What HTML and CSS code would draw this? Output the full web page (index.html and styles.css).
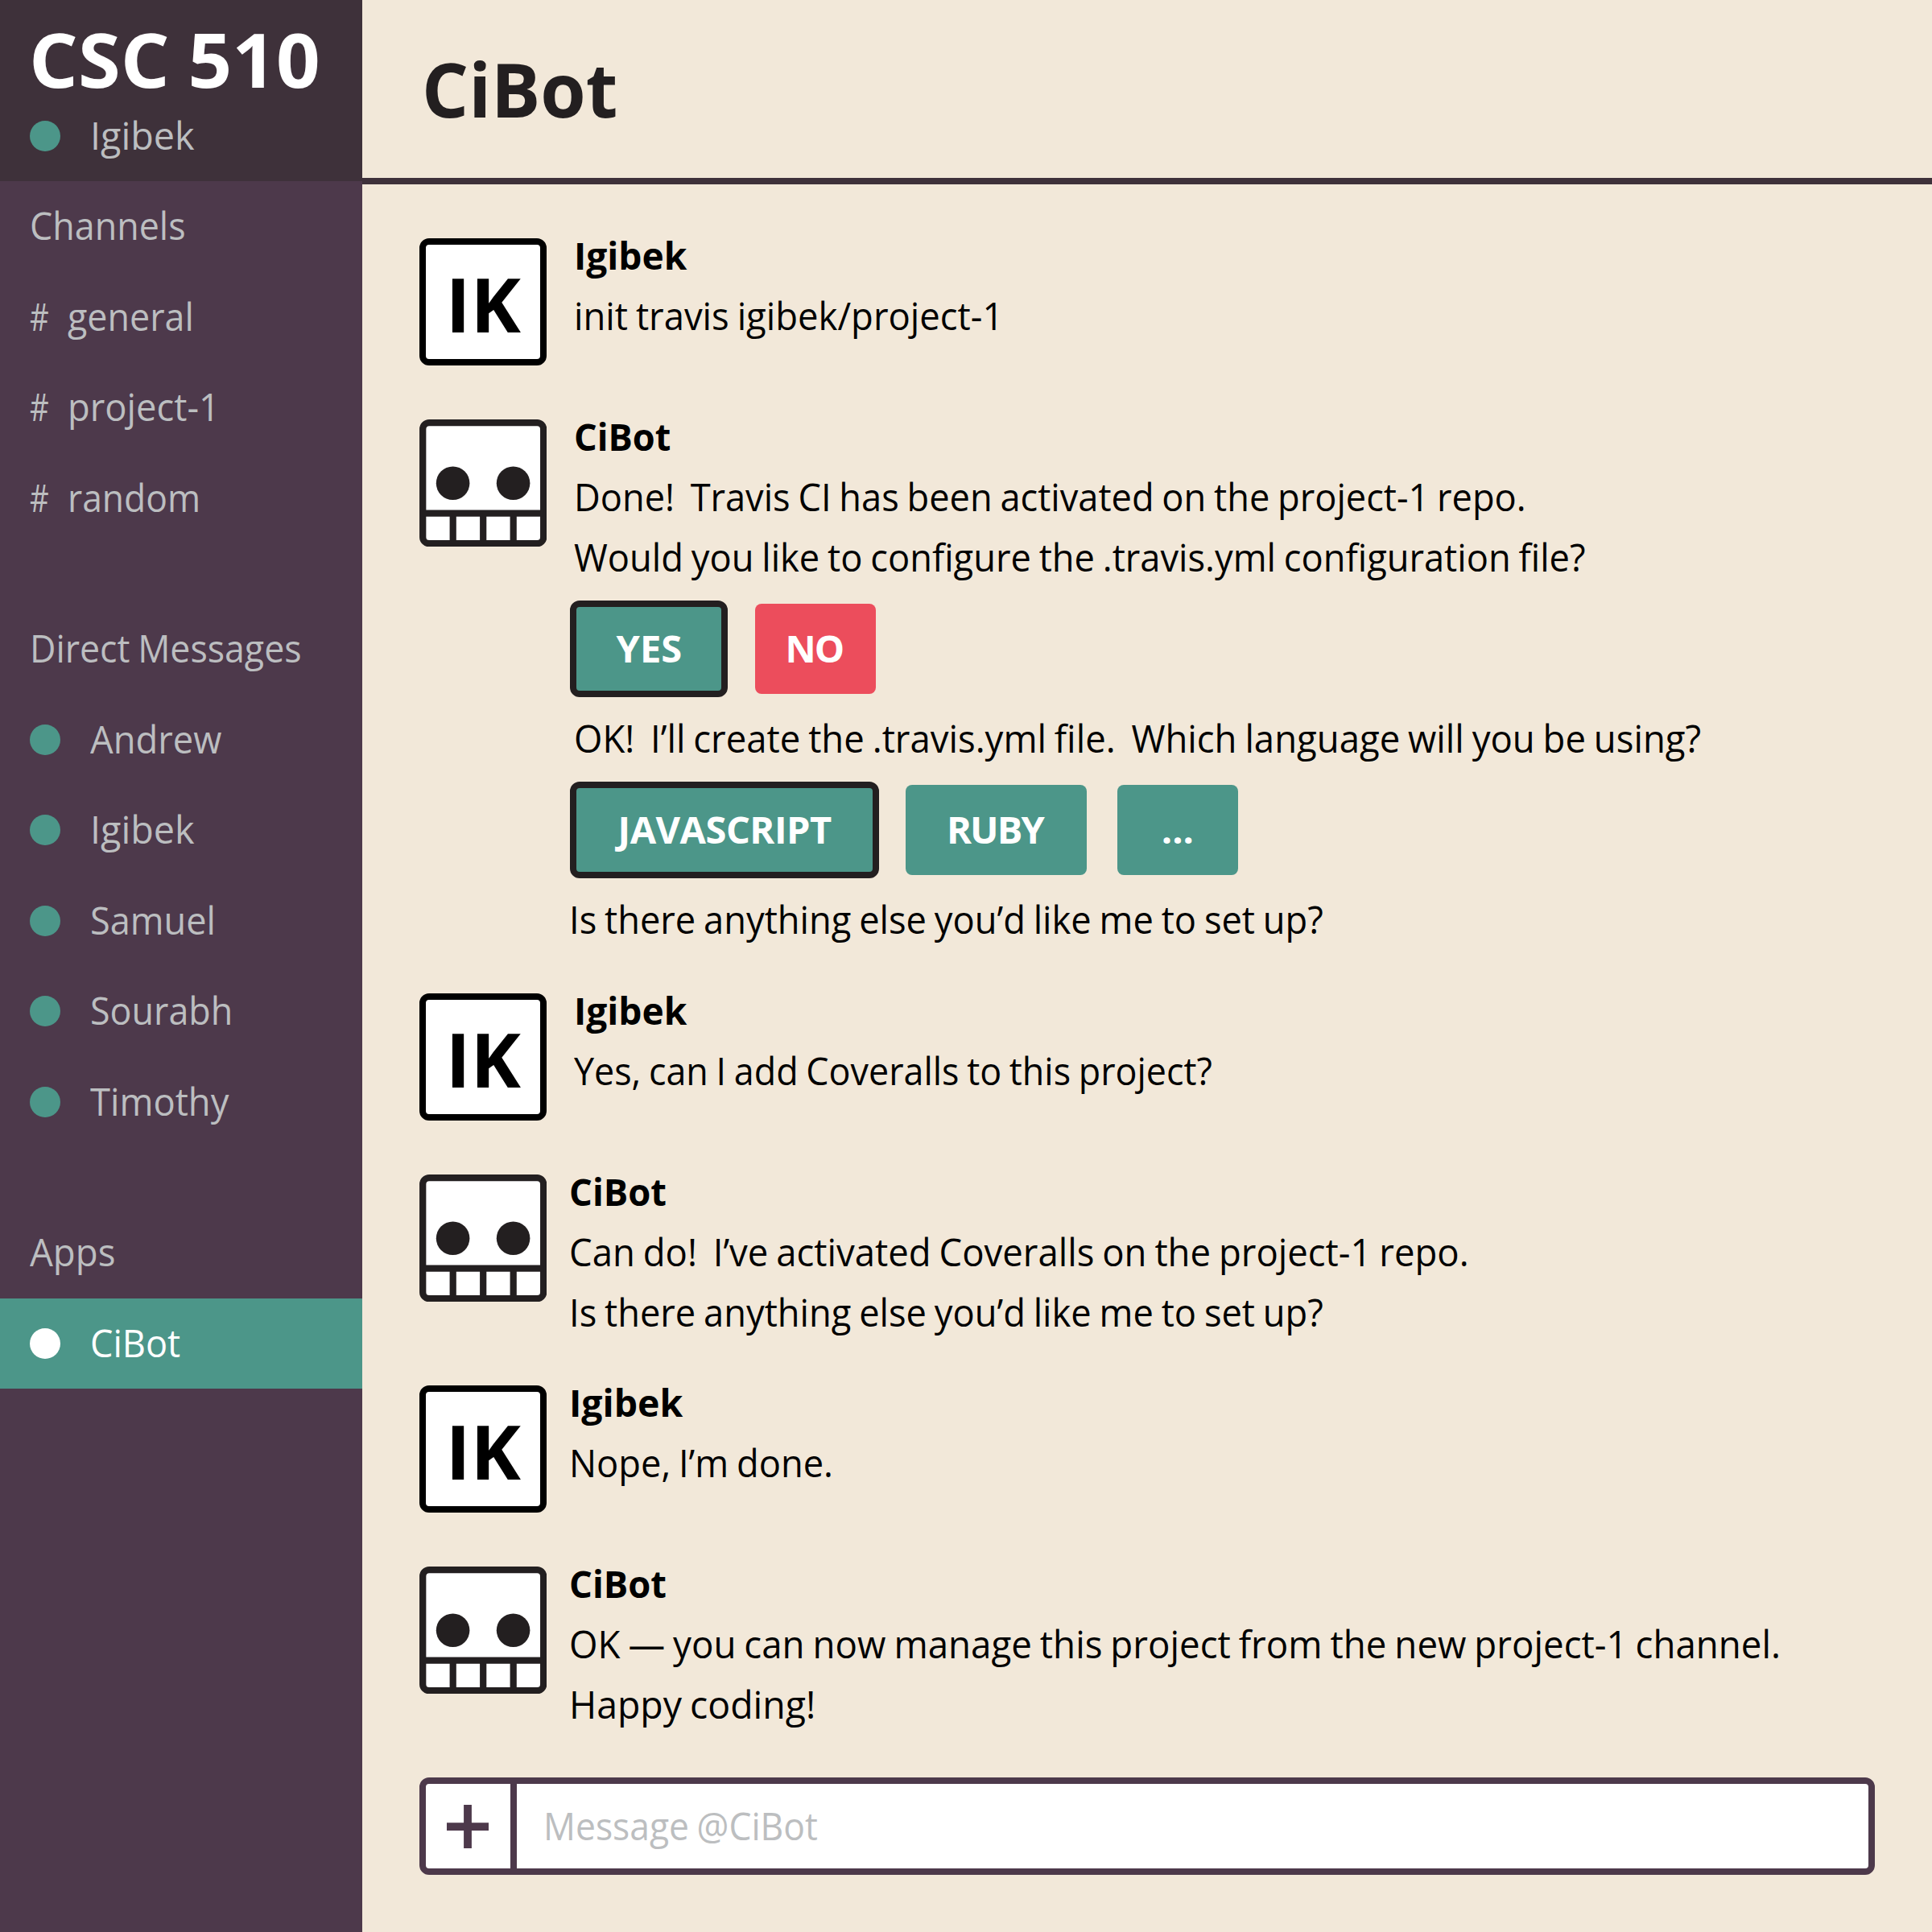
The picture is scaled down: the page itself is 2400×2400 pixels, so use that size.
FILE: index.html
```html
<!DOCTYPE html>
<html lang="en">
<head>
<meta charset="utf-8">
<title>CiBot</title>
<link rel="stylesheet" href="styles.css">
</head>
<body>
<svg class="symbols" aria-hidden="true">
  <symbol id="bot" viewBox="0 0 158.4 158.4">
    <rect x="4.2" y="4.2" width="150" height="150" rx="8" fill="#fff" stroke="#231f20" stroke-width="8.3"/>
    <circle cx="41.6" cy="79.2" r="20.8" fill="#231f20"/>
    <circle cx="116.6" cy="79.2" r="20.8" fill="#231f20"/>
    <path d="M4.2 116.7H154.2M41.7 116.7V154.2M79.2 116.7V154.2M116.7 116.7V154.2" fill="none" stroke="#231f20" stroke-width="8.2"/>
  </symbol>
</svg>
<div class="app">
  <aside class="sidebar">
    <header class="workspace">
      <h1 class="workspace-name"><span class="fit k102">CSC 510</span></h1>
      <div class="row"><i class="dot"></i><span class="fit k99">Igibek</span></div>
    </header>
    <nav class="nav">
      <section class="group">
        <div class="row"><span class="fit k955">Channels</span></div>
        <div class="row"><span class="hash">#</span><span class="fit k955">general</span></div>
        <div class="row"><span class="hash">#</span><span class="fit k965">project-1</span></div>
        <div class="row"><span class="hash">#</span><span class="fit k945">random</span></div>
      </section>
      <section class="group">
        <div class="row"><span class="fit k95">Direct Messages</span></div>
        <div class="row"><i class="dot"></i><span class="fit k965">Andrew</span></div>
        <div class="row"><i class="dot"></i><span class="fit k99">Igibek</span></div>
        <div class="row"><i class="dot"></i><span class="fit k96">Samuel</span></div>
        <div class="row"><i class="dot"></i><span class="fit k955">Sourabh</span></div>
        <div class="row"><i class="dot"></i><span class="fit k965">Timothy</span></div>
      </section>
      <section class="group">
        <div class="row"><span class="fit k97">Apps</span></div>
        <div class="row active"><i class="dot"></i><span class="fit k96">CiBot</span></div>
      </section>
    </nav>
  </aside>
  <main class="main">
    <header class="topbar"><h2 class="title"><span class="fit k97">CiBot</span></h2></header>
    <div class="messages">
      <article class="message">
        <div class="avatar user"><span class="initials">IK</span></div>
        <div class="body">
          <p class="name"><span class="fit k98">Igibek</span></p>
          <p><span class="fit k967">init travis igibek/project-1</span></p>
        </div>
      </article>
      <article class="message">
        <svg class="avatar"><use href="#bot"/></svg>
        <div class="body">
          <p class="name"><span class="fit k96">CiBot</span></p>
          <p><span class="fit k961">Done!  Travis CI has been activated on the project-1 repo.</span></p>
          <p><span class="fit k963">Would you like to configure the .travis.yml configuration file?</span></p>
          <div class="actions">
            <button class="btn chosen yes">YES</button><button class="btn danger">NO</button>
          </div>
          <p><span class="fit k968">OK!  I’ll create the .travis.yml file.  Which language will you be using?</span></p>
          <div class="actions">
            <button class="btn chosen js">JAVASCRIPT</button><button class="btn ruby">RUBY</button><button class="btn">...</button>
          </div>
          <p class="outset"><span class="fit k963">Is there anything else you’d like me to set up?</span></p>
        </div>
      </article>
      <article class="message">
        <div class="avatar user"><span class="initials">IK</span></div>
        <div class="body">
          <p class="name"><span class="fit k98">Igibek</span></p>
          <p><span class="fit k955">Yes, can I add Coveralls to this project?</span></p>
        </div>
      </article>
      <article class="message">
        <svg class="avatar"><use href="#bot"/></svg>
        <div class="body">
          <p class="name outset"><span class="fit k965">CiBot</span></p>
          <p class="outset"><span class="fit k968">Can do!  I’ve activated Coveralls on the project-1 repo.</span></p>
          <p class="outset"><span class="fit k963">Is there anything else you’d like me to set up?</span></p>
        </div>
      </article>
      <article class="message">
        <div class="avatar user"><span class="initials">IK</span></div>
        <div class="body">
          <p class="name outset"><span class="fit k985">Igibek</span></p>
          <p class="outset"><span class="fit k963">Nope, I’m done.</span></p>
        </div>
      </article>
      <article class="message">
        <svg class="avatar"><use href="#bot"/></svg>
        <div class="body">
          <p class="name outset"><span class="fit k965">CiBot</span></p>
          <p class="outset"><span class="fit k972">OK — you can now manage this project from the new project-1 channel.</span></p>
          <p class="outset"><span class="fit k985">Happy coding!</span></p>
        </div>
      </article>
    </div>
    <div class="composer">
      <div class="add">
        <svg class="plus" viewBox="0 0 52 54"><path d="M26 0V54M0 27.2H52" fill="none" stroke="#4d394b" stroke-width="9.8"/></svg>
      </div>
      <div class="placeholder"><span class="fit k945">Message @CiBot</span></div>
    </div>
  </main>
</div>
</body>
</html>
```
FILE: styles.css
```css
* { box-sizing: border-box; }

body {
  margin: 0;
  font-family: "Open Sans", "Noto Sans", sans-serif;
  font-size: 47px;
  line-height: 75px;
  color: #000;
}

h1, h2, p { margin: 0; font-weight: 400; font-size: inherit; }

.symbols { display: none; }

.app {
  display: flex;
  width: 2400px;
  height: 2400px;
  background: #f2e8d9;
}

/* Slightly condensed lettering */
.fit {
  display: inline-block;
  white-space: pre;
  word-spacing: -2px;
  transform: scaleX(var(--k, 0.95));
  transform-origin: left;
}
.k945 { --k: 0.945; }
.k95 { --k: 0.951; }
.k955 { --k: 0.954; }
.k96 { --k: 0.96; }
.k961 { --k: 0.9615; }
.k963 { --k: 0.963; }
.k965 { --k: 0.965; }
.k967 { --k: 0.967; }
.k968 { --k: 0.968; }
.k97 { --k: 0.971; }
.k972 { --k: 0.972; }
.k98 { --k: 0.98; }
.k985 { --k: 0.987; }
.k99 { --k: 0.994; }
.k102 { --k: 1.018; }

/* Sidebar */
.sidebar {
  flex: none;
  width: 450px;
  background: #4d394b;
  color: #bcbec0;
}
.workspace { height: 225px; background: #3e313a; }
.workspace-name {
  height: 112.5px;
  padding: 9px 0 0 35.5px;
  font-size: 94px;
  font-weight: 700;
  line-height: 128px;
  color: #fff;
}
.group { margin-bottom: 75px; }
.row {
  display: flex;
  align-items: center;
  height: 112.5px;
  padding-left: 37px;
}
.row .fit, .hash { margin-top: -1px; }
.dot {
  flex: none;
  width: 38px;
  height: 38px;
  margin-right: 36.5px;
  border-radius: 50%;
  background: #4c9689;
}
.hash {
  width: 47px;
  transform: scaleX(0.78);
  transform-origin: left;
}
.active { background: #4c9689; color: #fff; }
.active .dot { background: #fff; }

/* Conversation */
.main {
  flex: 1;
  display: flex;
  flex-direction: column;
}
.topbar {
  height: 229px;
  padding: 46px 0 0 73.5px;
  border-bottom: 8px solid #3e313a;
}
.title {
  font-size: 94px;
  font-weight: 700;
  line-height: 128px;
  color: #231f20;
}
.messages {
  display: flex;
  flex-direction: column;
  gap: 37.5px;
  padding: 51px 0 0 71px;
}
.message {
  display: flex;
  gap: 29px;
  min-height: 187.5px;
}
.avatar {
  flex: none;
  width: 158.4px;
  height: 158.4px;
  margin-top: 16px;
}
.user {
  display: flex;
  align-items: center;
  justify-content: center;
  border: 8.3px solid #000;
  border-radius: 12px;
  background: #fff;
  font-size: 94px;
  font-weight: 700;
}
.initials { margin: 5px 0 0 0; }
.body p { padding-left: 5px; }
.body .outset { padding-left: 0; margin-left: -1px; }
.body .name { font-weight: 700; }

.actions {
  display: flex;
  align-items: center;
  gap: 37.5px;
  height: 150px;
  padding-top: 2px;
}
.btn {
  width: 150px;
  height: 112.5px;
  padding: 0 0 3px;
  border: 0;
  border-radius: 8px;
  background: #4c9689;
  color: #fff;
  font: 700 47px "Open Sans", "Noto Sans", sans-serif;
}
.chosen {
  height: 120.5px;
  margin-right: -4px;
  border: 8px solid #231f20;
  border-radius: 12px;
}
.yes { width: 196px; }
.js { width: 383.5px; letter-spacing: -0.5px; }
.ruby { width: 225px; letter-spacing: -1.9px; padding-right: 4px; }
.danger { background: #ec4d5c; letter-spacing: -2px; padding-right: 3px; }

/* Message box */
.composer {
  display: flex;
  width: 1808px;
  height: 121px;
  margin: auto 0 71px 71px;
  border: 8px solid #4d394b;
  border-radius: 12px;
  background: #fff;
}
.add {
  width: 113px;
  padding: 26px 0 0 26px;
  border-right: 8px solid #4d394b;
}
.plus { display: block; width: 52px; height: 54px; }
.placeholder {
  padding: 15px 0 0 33px;
  color: #bcbec0;
}
```
